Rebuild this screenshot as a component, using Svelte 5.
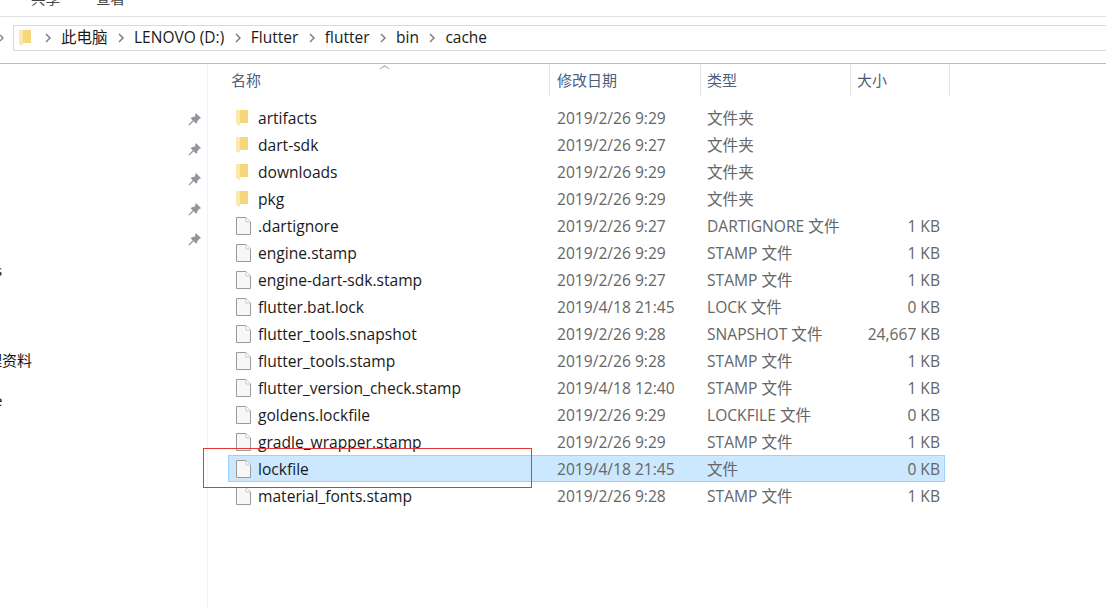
<script>
	const crumbs = ['此电脑', 'LENOVO (D:)', 'Flutter', 'flutter', 'bin', 'cache'];

	const files = [
		{ name: 'artifacts', date: '2019/2/26 9:29', type: '文件夹', size: '', folder: true },
		{ name: 'dart-sdk', date: '2019/2/26 9:27', type: '文件夹', size: '', folder: true },
		{ name: 'downloads', date: '2019/2/26 9:29', type: '文件夹', size: '', folder: true },
		{ name: 'pkg', date: '2019/2/26 9:29', type: '文件夹', size: '', folder: true },
		{ name: '.dartignore', date: '2019/2/26 9:27', type: 'DARTIGNORE 文件', size: '1 KB' },
		{ name: 'engine.stamp', date: '2019/2/26 9:29', type: 'STAMP 文件', size: '1 KB' },
		{ name: 'engine-dart-sdk.stamp', date: '2019/2/26 9:27', type: 'STAMP 文件', size: '1 KB' },
		{ name: 'flutter.bat.lock', date: '2019/4/18 21:45', type: 'LOCK 文件', size: '0 KB' },
		{ name: 'flutter_tools.snapshot', date: '2019/2/26 9:28', type: 'SNAPSHOT 文件', size: '24,667 KB' },
		{ name: 'flutter_tools.stamp', date: '2019/2/26 9:28', type: 'STAMP 文件', size: '1 KB' },
		{ name: 'flutter_version_check.stamp', date: '2019/4/18 12:40', type: 'STAMP 文件', size: '1 KB' },
		{ name: 'goldens.lockfile', date: '2019/2/26 9:29', type: 'LOCKFILE 文件', size: '0 KB' },
		{ name: 'gradle_wrapper.stamp', date: '2019/2/26 9:29', type: 'STAMP 文件', size: '1 KB' },
		{ name: 'lockfile', date: '2019/4/18 21:45', type: '文件', size: '0 KB', selected: true },
		{ name: 'material_fonts.stamp', date: '2019/2/26 9:28', type: 'STAMP 文件', size: '1 KB' }
	];

	const pins = [0, 1, 2, 3, 4];
</script>

{#snippet folder()}
	<svg width="12" height="18" viewBox="0 0 12 18">
		<path d="M4 1h8v13H4z" fill="#f6d67a" />
		<path d="M0 1h4v16l-3-1.500-1-1z" fill="#fce8ad" />
	</svg>
{/snippet}

{#snippet doc()}
	<svg width="15" height="18" viewBox="0 0 15 18">
		<path d="M.5 .5h9.500l4.500 4.500v12.500H.5z" fill="#f7f7f7" stroke="#9a9a9a" />
		<path d="M10 .5v4.500h4.500" fill="#fff" stroke="#c8c8c8" />
	</svg>
{/snippet}

<div class="window">
	<div class="tabs">
		<span>共享</span>
		<span>查看</span>
	</div>

	<div class="address-row">
		<svg class="back" width="4" height="8" viewBox="0 0 4 8"><path d="M0 1l3 3-3 3" fill="none" stroke="#888" stroke-width="1.4" /></svg>
		<div class="address">
			<span class="addr-folder">{@render folder()}</span>
			{#each crumbs as c}
				<svg class="chev" width="6" height="10" viewBox="0 0 6 10"><path d="M1 1l4 4-4 4" fill="none" stroke="#777" stroke-width="1.4" /></svg>
				<span class="crumb">{c}</span>
			{/each}
		</div>
	</div>

	<div class="main">
		<div class="sidebar">
			<div class="pins">
				{#each pins as p}
					<svg width="14" height="16" viewBox="0 0 16 16">
						<path d="M9 1l6 6-1.500 .5-3 3v2L9 13 3 7l1.500-1L8 5l.5-2.500z" fill="#8f969e" />
						<path d="M6 10l-5 5" fill="none" stroke="#8f969e" stroke-width="1.500" />
					</svg>
				{/each}
			</div>
			<div class="cut first">s</div>
			<div class="cut label">理资料</div>
			<div class="cut last">e</div>
		</div>

		<div class="list">
			<div class="header">
				<div class="col name">名称<i class="sort"></i></div>
				<div class="col date">修改日期</div>
				<div class="col type">类型</div>
				<div class="col size">大小</div>
			</div>
			<div class="rows">
				{#each files as f}
					<div class="row" class:selected={f.selected}>
						<div class="cell-name">
							<span class="icon">
								{#if f.folder}{@render folder()}{:else}{@render doc()}{/if}
							</span>
							{f.name}
						</div>
						<div class="cell date">{f.date}</div>
						<div class="cell type">{f.type}</div>
						<div class="cell size">{f.size}</div>
					</div>
				{/each}
			</div>
			<div class="annotation"></div>
		</div>
	</div>
</div>

<style>
	:global(body) {
		background: #fff;
	}

	.window {
		width: 1106px;
		height: 609px;
		overflow: hidden;
		font-family: "Open Sans", "Noto Sans CJK SC", sans-serif;
		font-size: 15.500px;
		color: #1a1a1a;
	}

	.tabs {
		height: 16px;
		border-bottom: 1px solid #e1e1e1;
		display: flex;
		gap: 36px;
		padding-left: 31px;
		overflow: hidden;
		font-size: 14.500px;
		line-height: 20px;
		color: #444;
	}

	.tabs span {
		margin-top: -11px;
	}

	.address-row {
		height: 38px;
		border-bottom: 1px solid #bcbcbc;
		display: flex;
		padding-top: 8px;
	}

	.back {
		margin: 9px 9px 0 0;
	}

	.address {
		flex: 1;
		height: 24px;
		border: 1px solid #d9d9d9;
		border-right: none;
		display: flex;
		align-items: center;
		padding-left: 5px;
	}

	.addr-folder {
		display: flex;
		width: 12px;
		margin-right: 3.500px;
	}

	.chev {
		margin: 0 10px 0 10.500px;
	}

	.crumb {
		line-height: 22px;
		height: 24px;
	}

	.main {
		display: flex;
		height: 545px;
	}

	.sidebar {
		width: 207px;
		border-right: 1px solid #f2f2f2;
		overflow: hidden;
	}

	.pins {
		display: flex;
		flex-direction: column;
		align-items: flex-end;
		gap: 14px;
		padding: 47px 5px 0 0;
	}

	.cut {
		font-size: 15px;
		line-height: 20px;
		color: #111;
	}

	.first {
		margin: 13px 0 0 -5px;
	}

	.label {
		margin: 70px 0 0 -13px;
	}

	.last {
		margin: 20px 0 0 -6px;
	}

	.list {
		flex: 1;
		position: relative;
	}

	.header {
		display: flex;
		height: 32px;
		color: #4c607a;
		font-size: 15px;
		line-height: 33px;
	}

	.col {
		border-right: 1px solid #e5e5e5;
		padding-left: 7px;
		box-sizing: border-box;
		position: relative;
	}

	.col.name {
		width: 342px;
		padding-left: 23px;
	}

	.col.date {
		width: 151px;
	}

	.col.type {
		width: 150px;
		padding-left: 6px;
	}

	.col.size {
		width: 99px;
		padding-left: 6px;
	}

	.sort {
		position: absolute;
		left: 173px;
		top: 1px;
		width: 6px;
		height: 6px;
		border-left: 1px solid #999;
		border-top: 1px solid #999;
		transform: scaleY(.6) rotate(45deg);
	}

	.rows {
		padding: 8px 0 0 20px;
	}

	.row {
		display: flex;
		height: 27px;
		width: 717px;
		box-sizing: border-box;
		align-items: center;
		border: 1px solid transparent;
		color: #666;
		font-size: 15.600px;
	}

	.row.selected {
		background: #cce8ff;
		border-color: #99d1ff;
	}

	.cell-name {
		width: 328px;
		flex: none;
		display: flex;
		align-items: center;
		color: #1a1a1a;
		white-space: nowrap;
	}

	.icon {
		width: 29px;
		padding-left: 7px;
		box-sizing: border-box;
		display: flex;
		flex: none;
	}

	.cell.date {
		width: 150px;
		flex: none;
	}

	.cell.type {
		width: 143px;
		flex: none;
	}

	.cell.size {
		width: 90px;
		flex: none;
		text-align: right;
	}

	.annotation {
		position: absolute;
		left: -5px;
		top: 384px;
		width: 327px;
		height: 38px;
		border: 1px solid #e53935;
		pointer-events: none;
	}
</style>
